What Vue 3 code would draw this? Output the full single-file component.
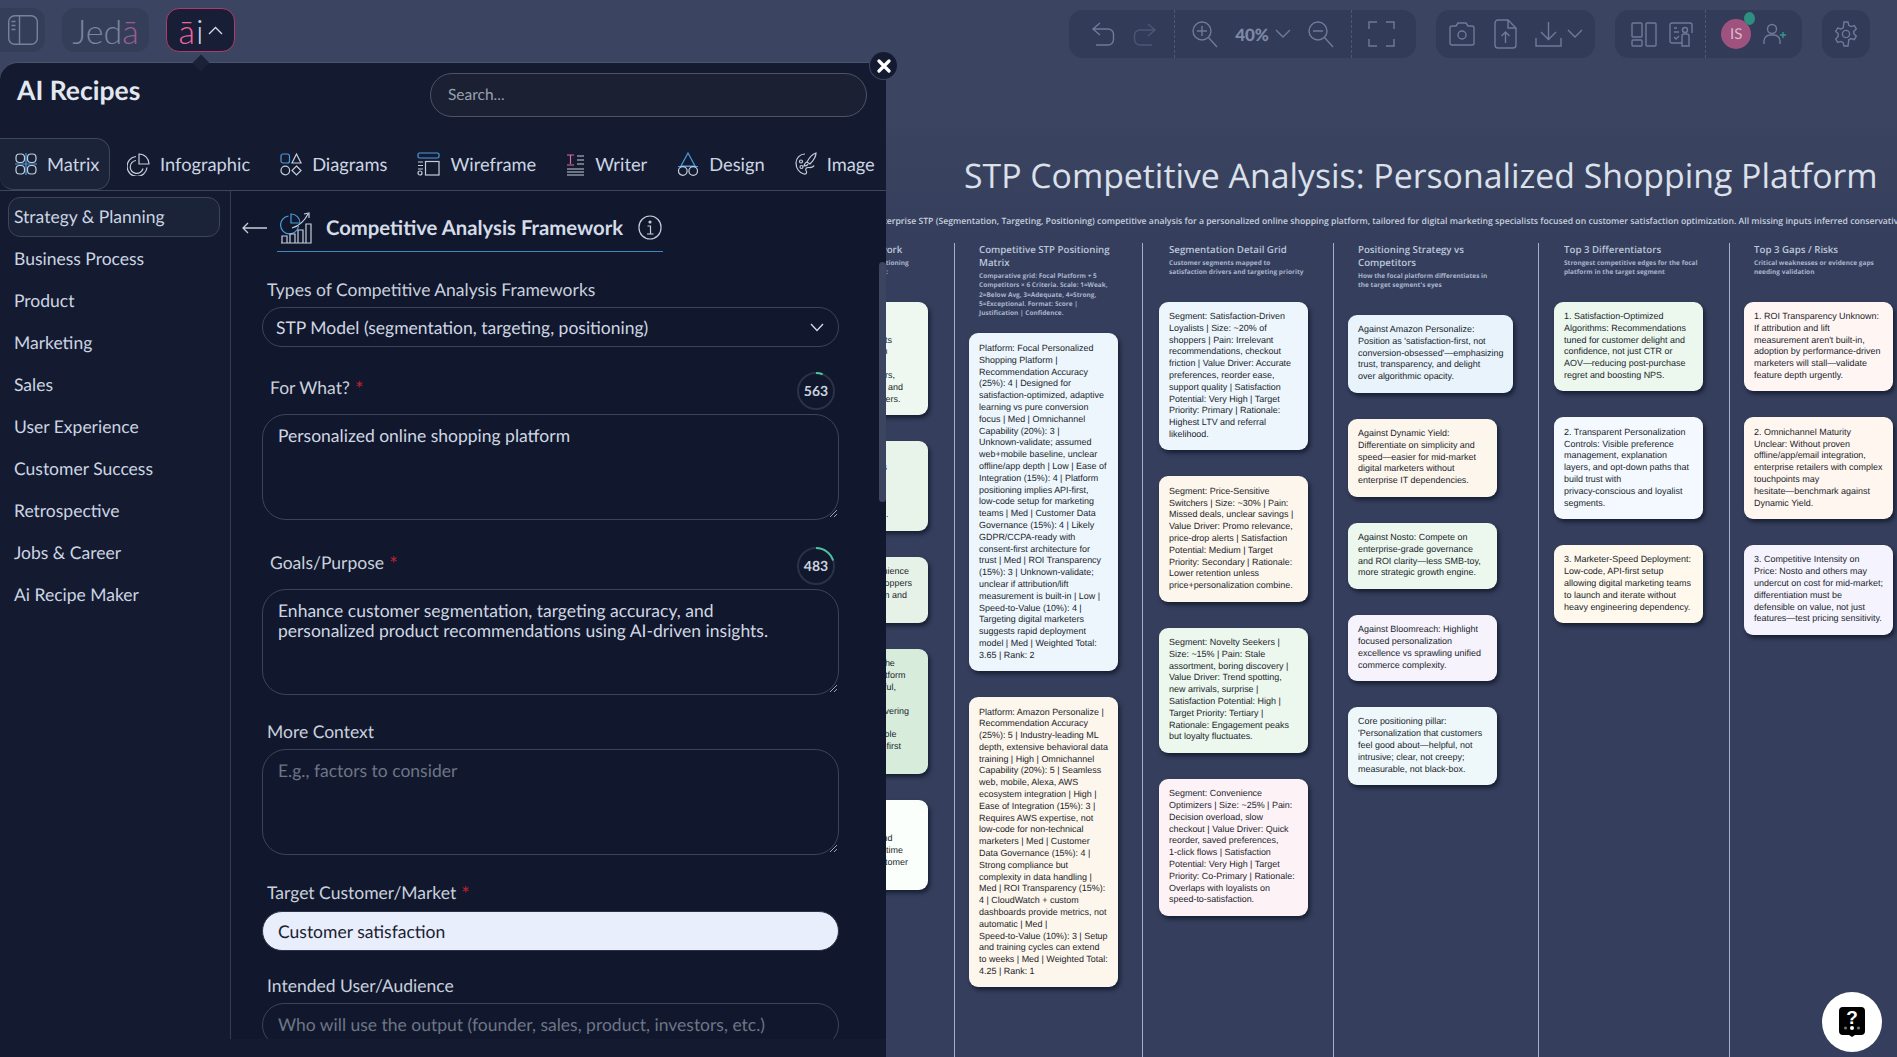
<template>
  <div class="app">
    <!-- top toolbar -->
    <header class="topbar">
      <div class="tool-left">
        <button class="sq-btn sq-btn--side">
          <svg width="30" height="30" viewBox="0 0 30 30" fill="none" stroke="#76829c" stroke-width="1.4">
            <rect x="0.7" y="0.7" width="28.6" height="28.6" rx="6" />
            <path d="M11.5 1v28M3.5 6.5h4M3.5 10.5h4M3.5 14.5h4" />
          </svg>
        </button>
        <button class="sq-btn sq-btn--jeda">Jed<span>ā</span></button>
        <button class="sq-btn sq-btn--ai">
          <span class="ai-a">ā</span><span class="ai-i">i</span>
          <svg width="15" height="9" viewBox="0 0 15 9" fill="none" stroke="#d5dcea" stroke-width="1.3"><path d="M1 8l6.5-6.5L14 8" /></svg>
        </button>
      </div>

      <div class="tool-right">
        <div class="tool-group tool-group--view">
          <svg class="ti" width="26" height="26" viewBox="0 0 26 26"><path d="M10 2L3 8l7 6M3 8h15a5.500 5.500 0 0 1 5.500 5.500v5a5.500 5.500 0 0 1-5.500 5.500H6" /></svg>
          <svg class="ti ti--off" width="26" height="26" viewBox="0 0 26 26"><path d="M16 3l7 6-7 6M23 9H8a5.500 5.500 0 0 0-5.500 5.500v4A5.500 5.500 0 0 0 8 24h12" /></svg>
          <span class="dash"></span>
          <svg class="ti" width="28" height="28" viewBox="0 0 28 28"><circle cx="11" cy="11" r="9" /><path d="M11 6v10M6 11h10M17.500 17.500L26 27" /></svg>
          <span class="zoom-val">40%<svg class="ti" width="16" height="10" viewBox="0 0 16 10"><path d="M1 1l7 7 7-7" /></svg></span>
          <svg class="ti" width="28" height="28" viewBox="0 0 28 28"><circle cx="11" cy="11" r="9" /><path d="M6 11h10M17.500 17.500L26 27" /></svg>
          <span class="dash"></span>
          <svg class="ti" width="27" height="26" viewBox="0 0 27 26"><path d="M9 1H1v7M18 1h8v7M9 25H1v-7M18 25h8v-7" /></svg>
        </div>

        <div class="tool-group tool-group--file">
          <svg class="ti" width="26" height="24" viewBox="0 0 26 24"><path d="M3 4h4l2-3h8l2 3h4a2 2 0 0 1 2 2v15a2 2 0 0 1-2 2H3a2 2 0 0 1-2-2V6a2 2 0 0 1 2-2z" /><circle cx="13" cy="13" r="4" /></svg>
          <svg class="ti" width="23" height="30" viewBox="0 0 23 30"><path d="M14 1H4a3 3 0 0 0-3 3v22a3 3 0 0 0 3 3h15a3 3 0 0 0 3-3V9zM14 1v8h8M11.500 24V13M7.500 17l4-4 4 4" /></svg>
          <span class="dl">
            <svg class="ti" width="27" height="27" viewBox="0 0 27 27"><path d="M13.500 1v17M6 11l7.500 7.500L21 11M1 17v8h25v-8" /></svg>
            <svg class="ti" width="16" height="10" viewBox="0 0 16 10"><path d="M1 1l7 7 7-7" /></svg>
          </span>
        </div>

        <div class="tool-group tool-group--user">
          <svg class="ti" width="26" height="25" viewBox="0 0 26 25"><rect x="1" y="1" width="10" height="14" rx="1" /><rect x="1" y="18" width="10" height="6" rx="1" /><rect x="15" y="1" width="10" height="23" rx="1" /></svg>
          <svg class="ti" width="24" height="25" viewBox="0 0 24 25"><path d="M13 21H3a2 2 0 0 1-2-2V3a2 2 0 0 1 2-2h18a2 2 0 0 1 2 2v8M5 6h3M5 10h5M5 15l2 2 3-3" /><circle cx="16" cy="8" r="2.500" /><path d="M13 24v-10a2 2 0 0 1 2-2h3a2 2 0 0 1 2 2v10z" /></svg>
          <span class="dash"></span>
          <div class="avatar">IS<i></i></div>
          <svg class="ti" width="25" height="22" viewBox="0 0 25 22"><circle cx="9" cy="6" r="4.500" /><path d="M1 21v-3a6 6 0 0 1 6-6h4a6 6 0 0 1 6 6v3" /><path class="plus" d="M20 9v6M17 12h6" /></svg>
        </div>

        <div class="tool-group tool-group--gear">
          <svg class="ti" width="24" height="26" viewBox="0 0 24 26"><circle cx="12" cy="13" r="3.600" /><path d="M10 1h4l.8 3.400 2.200 1.200 3.300-1 2 3.400-2.500 2.400v2.400L22.300 15.200l-2 3.400-3.300-1-2.200 1.200L14 25h-4l-.8-3.400-2.200-1.200-3.300 1-2-3.400L4.200 15.200v-2.400L1.700 10.400l2-3.400 3.300 1 2.200-1.200z" /></svg>
        </div>
      </div>
    </header>

    <!-- document on the canvas -->
    <main class="doc">
      <h1 class="doc-title">STP Competitive Analysis: Personalized Shopping Platform</h1>
      <p class="doc-summary">Enterprise STP (Segmentation, Targeting, Positioning) competitive analysis for a personalized online shopping platform, tailored for digital marketing specialists focused on customer satisfaction optimization. All missing inputs inferred conservatively.</p>
      <div class="cols">
        <section
          v-for="col in columns"
          :key="col.title"
          class="col"
          :style="{ width: col.width + 'px', paddingLeft: col.pad + 'px' }"
        >
          <div class="col-head" :style="{ marginBottom: col.gap + 'px' }">
            <h2>{{ col.title }}</h2>
            <p>{{ col.sub }}</p>
          </div>
          <div class="cards">
            <div
              v-for="card in col.cards"
              :key="card.text"
              class="card"
              :class="{ 'card--lines': col.lines }"
              :style="{ background: card.bg, width: (card.width || 149) + 'px' }"
            >{{ keepWords(card.text) }}</div>
          </div>
        </section>
      </div>
    </main>

    <!-- AI recipes popover -->
    <aside class="panel">
      <span class="panel-tip"></span>
      <button class="panel-close">
        <svg width="14" height="14" viewBox="0 0 14 14" stroke="#fff" stroke-width="3.200" stroke-linecap="round"><path d="M2 2l10 10M12 2L2 12" /></svg>
      </button>

      <div class="panel-head">
        <h3>AI Recipes</h3>
        <div class="search">Search...</div>
      </div>

      <nav class="tabs">
        <div class="tab tab--on">
          <svg class="pi" width="24" height="24" viewBox="0 0 24 24"><rect x="2" y="2" width="8.500" height="8.500" rx="3.500" /><rect x="13.500" y="2" width="8.500" height="8.500" rx="3.500" /><rect x="2" y="13.500" width="8.500" height="8.500" rx="3.500" /><rect x="13.500" y="13.500" width="8.500" height="8.500" rx="3.500" /><path class="bl" d="M1 12h22M12 1v22" /></svg>
          Matrix
        </div>
        <div class="tab">
          <svg class="pi" width="23" height="23" viewBox="0 0 23 23"><path d="M12 1v10h10a10 10 0 0 0-10-10zM9 3.500a10 10 0 1 0 11 11M9 7.500a6.500 6.500 0 1 0 7 8" /></svg>
          Infographic
        </div>
        <div class="tab">
          <svg class="pi" width="22" height="23" viewBox="0 0 22 23"><rect class="bl" x="1" y="1" width="8.500" height="9" rx="2" /><path d="M16.500 1l4.500 9h-9z" /><circle cx="5.300" cy="17.500" r="4.300" /><path d="M16.500 13l4.500 4.500-4.500 4.500-4.500-4.500z" /></svg>
          Diagrams
        </div>
        <div class="tab">
          <svg class="pi" width="23" height="24" viewBox="0 0 23 24"><rect class="bl" x="1" y="1" width="21" height="5" rx="1.500" /><rect x="8.500" y="9.500" width="13.500" height="13.500" /><path d="M1 10h5M1 13.500h5M1 17h5" /><circle cx="3" cy="21" r="2" /></svg>
          Wireframe
        </div>
        <div class="tab">
          <svg class="pi" width="19" height="23" viewBox="0 0 19 23"><path class="pk" d="M1 2h7M4.500 2v9M1 12h7" /><path d="M11 3h7M11 7h7M11 11h7M1 16h17M1 19h17M1 22h17" /></svg>
          Writer
        </div>
        <div class="tab">
          <svg class="pi" width="22" height="24" viewBox="0 0 22 24"><path class="bl" d="M11 1L18 14H4zM1 14.500h20" /><circle cx="5.800" cy="19" r="4.300" /><circle cx="16.200" cy="19" r="4.300" /></svg>
          Design
        </div>
        <div class="tab">
          <svg class="pi" width="22" height="24" viewBox="0 0 22 24"><path d="M10 2C5 2 1 6 1 11s3 10 8 11c3 .6 3-2 2-3.500-.8-1.500.5-3 2-3 2 0 5 .5 6-2M4.500 9.500a1.500 1.500 0 1 0 3 0 1.500 1.500 0 1 0-3 0M5 15a1.500 1.500 0 1 0 3 0 1.500 1.500 0 1 0-3 0" /><path d="M21 1c-3 1-7 5-9 9l3 2c3-3 6-7 6-11zM12 10c-2 .5-2.500 2-3 4 2 0 3.500-.5 4-2" /></svg>
          Image
        </div>
      </nav>

      <div class="panel-body">
        <ul class="side">
          <li v-for="(item, i) in categories" :key="item" :class="{ on: i === 0 }">{{ item }}</li>
        </ul>

        <div class="form">
          <div class="form-head">
            <svg class="back" width="26" height="12" viewBox="0 0 26 12" fill="none" stroke="#c6cedb" stroke-width="1.300"><path d="M25 6H1M6 1L1 6l5 5" /></svg>
            <div class="form-title">
              <svg class="pi" width="32" height="32" viewBox="0 0 32 32"><path class="bl" d="M11 2v9h9a9 9 0 0 0-9-9zM8.500 4a9 9 0 1 0 10 10" /><path d="M1 31h30M2 24h5v7H2zM10 22h5v9h-5zM18 18h5v13h-5zM26 12h5v19h-5zM12 16c7-2 12-6 16-14M24 2l5-1 0 5" /></svg>
              <h4>Competitive Analysis Framework</h4>
              <svg class="pi info" width="24" height="25" viewBox="0 0 24 25"><rect x="1" y="1" width="22" height="23" rx="11" /><circle cx="12" cy="7" r="1" fill="#c6cedb" /><path d="M9.500 11h3v8M9 19h6.500" /></svg>
            </div>
          </div>

          <template v-for="field in fields" :key="field.label">
            <div class="label-row" :class="{ 'label-row--counter': field.count }" :style="{ marginTop: field.top + 'px' }">
              <label>{{ field.label }}<b v-if="field.req"> *</b></label>
              <div v-if="field.count" class="counter">
                <svg width="38" height="38" viewBox="0 0 38 38" fill="none">
                  <circle cx="19" cy="19" r="18" stroke="#2a3246" stroke-width="2" />
                  <circle
                    cx="19" cy="19" r="18" stroke="#4cc49e" stroke-width="2"
                    pathLength="100"
                    :stroke-dasharray="field.arc + ' 100'"
                    transform="rotate(-90 19 19)"
                  />
                </svg>
                <span>{{ field.count }}</span>
              </div>
            </div>
            <div class="input" :class="'input--' + field.kind">
              <span :class="{ ph: field.ph }">{{ field.value }}</span>
              <svg v-if="field.kind === 'area'" class="grip" width="10" height="10" viewBox="0 0 10 10" stroke="#9aa3b3"><path d="M9 2L2 9M9 6L6 9" /></svg>
              <svg v-if="field.kind === 'select'" class="chev" width="14" height="9" viewBox="0 0 14 9" fill="none" stroke="#d4dbe6" stroke-width="1.300"><path d="M1 1l6 6.500L13 1" /></svg>
            </div>
          </template>
        </div>
        <span class="scroll-thumb"></span>
      </div>
    </aside>

    <button class="help">
      <svg width="26" height="30" viewBox="0 0 26 30">
        <path d="M4 0h18a4 4 0 0 1 4 4v20a4 4 0 0 1-4 4h-6l-3 2-3-2H4a4 4 0 0 1-4-4V4a4 4 0 0 1 4-4z" fill="#000" />
        <circle cx="6.500" cy="21" r="1.500" fill="#777" /><circle cx="19.500" cy="21" r="1.500" fill="#777" /><circle cx="13" cy="21" r="2" fill="#fff" />
        <text x="13" y="17" text-anchor="middle" class="help-q">?</text>
      </svg>
    </button>
  </div>
</template>

<script setup>
const categories = [
  'Strategy & Planning', 'Business Process', 'Product', 'Marketing', 'Sales',
  'User Experience', 'Customer Success', 'Retrospective', 'Jobs & Career', 'Ai Recipe Maker'
]

const fields = [
  { label: 'Types of Competitive Analysis Frameworks', kind: 'select', top: 28, value: 'STP Model (segmentation, targeting, positioning)' },
  { label: 'For What?', req: true, count: 563, arc: 6, kind: 'area', top: 25, value: 'Personalized online shopping platform' },
  { label: 'Goals/Purpose', req: true, count: 483, arc: 20, kind: 'area', top: 27, value: 'Enhance customer segmentation, targeting accuracy, and personalized product recommendations using AI-driven insights.' },
  { label: 'More Context', kind: 'area', top: 27, ph: true, value: 'E.g., factors to consider' },
  { label: 'Target Customer/Market', req: true, kind: 'filled', top: 28, value: 'Customer satisfaction' },
  { label: 'Intended User/Audience', kind: 'line', top: 25, ph: true, value: 'Who will use the output (founder, sales, product, investors, etc.)' }
]

// the board never wraps inside a hyphenated word or at a dash
const keepWords = (text) => text.replace(/-/g, '-\u2060').replace(/—/g, '\u2060—\u2060')

const blue = '#edf6fc'
const cream = '#fdf6ec'
const green = '#ecf7ee'
const pink = '#fdf3f7'
const lilac = '#f6f3fc'

const columns = [
  {
    title: 'STP Analysis Framework', width: 190, pad: 14, gap: 25, lines: true,
    sub: 'Segmentation, Targeting, Positioning\nFramework applied to market:',
    cards: [
      { bg: '#eef8f0', text: 'Segmentation approach:\nOnline shoppers\ngrouped across segments\nby intent and satisfaction\nbehaviour\nwith value-focused buyers,\nsavings seekers, trends, and\nconvenience-led customers.' },
      { bg: '#e8f4ea', text: 'Targeting approach\nSatisfaction-first loyalists\nand high-value targeting\nsegments\nacross retail teams and\ndigital commerce (scale).' },
      { bg: '#e6f2e8', text: 'Primary focus on convenience\nand loyal, repeat-buy shoppers\nwho seek personalization and\ntransparent value (ROI).' },
      { bg: '#d8ecdc', text: 'Positioning statement: The\nfocal personalization platform\nis the most trusted, helpful,\nrecommendation layer\nfor marketing teams delivering\nmeasurable delight\nat mid-market and scalable\nprice for any lean digital-first\nretailer.' },
      { bg: '#fbfffc', text: 'Outcome measures that\nmatter most\nfor retention, the NPS and\nconfidence, trust and lifetime\nvalue earned from a customer\nadvocacy.' }
    ]
  },
  {
    title: 'Competitive STP Positioning Matrix', width: 188, pad: 14, gap: 16,
    sub: 'Comparative grid: Focal Platform + 5 Competitors × 6 Criteria. Scale: 1=Weak, 2=Below Avg, 3=Adequate, 4=Strong, 5=Exceptional. Format: Score | Justification | Confidence.',
    cards: [
      { bg: blue, text: 'Platform: Focal Personalized Shopping Platform | Recommendation Accuracy (25%): 4 | Designed for satisfaction-optimized, adaptive learning vs pure conversion focus | Med | Omnichannel Capability (20%): 3 | Unknown-validate; assumed web+mobile baseline, unclear offline/app depth | Low | Ease of Integration (15%): 4 | Platform positioning implies API-first, low-code setup for marketing teams | Med | Customer Data Governance (15%): 4 | Likely GDPR/CCPA-ready with consent-first architecture for trust | Med | ROI Transparency (15%): 3 | Unknown-validate; unclear if attribution/lift measurement is built-in | Low | Speed-to-Value (10%): 4 | Targeting digital marketers suggests rapid deployment model | Med | Weighted Total: 3.65 | Rank: 2' },
      { bg: cream, text: 'Platform: Amazon Personalize | Recommendation Accuracy (25%): 5 | Industry-leading ML depth, extensive behavioral data training | High | Omnichannel Capability (20%): 5 | Seamless web, mobile, Alexa, AWS ecosystem integration | High | Ease of Integration (15%): 3 | Requires AWS expertise, not low-code for non-technical marketers | Med | Customer Data Governance (15%): 4 | Strong compliance but complexity in data handling | Med | ROI Transparency (15%): 4 | CloudWatch + custom dashboards provide metrics, not automatic | Med | Speed-to-Value (10%): 3 | Setup and training cycles can extend to weeks | Med | Weighted Total: 4.25 | Rank: 1' }
    ]
  },
  {
    title: 'Segmentation Detail Grid', width: 191, pad: 16, gap: 25,
    sub: 'Customer segments mapped to satisfaction drivers and targeting priority',
    cards: [
      { bg: blue, text: 'Segment: Satisfaction-Driven Loyalists | Size: ~20% of shoppers | Pain: Irrelevant recommendations, checkout friction | Value Driver: Accurate preferences, reorder ease, support quality | Satisfaction Potential: Very High | Target Priority: Primary | Rationale: Highest LTV and referral likelihood.' },
      { bg: cream, text: 'Segment: Price-Sensitive Switchers | Size: ~30% | Pain: Missed deals, unclear savings | Value Driver: Promo relevance, price-drop alerts | Satisfaction Potential: Medium | Target Priority: Secondary | Rationale: Lower retention unless price+personalization combine.' },
      { bg: green, text: 'Segment: Novelty Seekers | Size: ~15% | Pain: Stale assortment, boring discovery | Value Driver: Trend spotting, new arrivals, surprise | Satisfaction Potential: High | Target Priority: Tertiary | Rationale: Engagement peaks but loyalty fluctuates.' },
      { bg: pink, text: 'Segment: Convenience Optimizers | Size: ~25% | Pain: Decision overload, slow checkout | Value Driver: Quick reorder, saved preferences, 1-click flows | Satisfaction Potential: Very High | Target Priority: Co-Primary | Rationale: Overlaps with loyalists on speed-to-satisfaction.' }
    ]
  },
  {
    title: 'Positioning Strategy vs Competitors', width: 205, pad: 14, gap: 25,
    sub: "How the focal platform differentiates in the target segment's eyes",
    cards: [
      { bg: '#e8f3fb', width: 165, text: "Against Amazon Personalize: Position as 'satisfaction-first, not conversion-obsessed'—emphasizing trust, transparency, and delight over\u00a0algorithmic opacity." },
      { bg: cream, text: 'Against Dynamic Yield: Differentiate on simplicity and speed—easier for mid-market digital marketers without enterprise IT dependencies.' },
      { bg: green, text: 'Against Nosto: Compete on enterprise-grade governance and ROI clarity—less SMB-toy, more strategic growth engine.' },
      { bg: lilac, text: 'Against Bloomreach: Highlight focused personalization excellence vs sprawling unified commerce complexity.' },
      { bg: '#eef8fb', text: "Core positioning pillar: 'Personalization that customers feel good about—helpful, not intrusive; clear, not creepy; measurable, not black-box." }
    ]
  },
  {
    title: 'Top 3 Differentiators', width: 191, pad: 15, gap: 25,
    sub: 'Strongest competitive edges for the focal platform in the target segment',
    cards: [
      { bg: green, text: '1. Satisfaction-Optimized Algorithms: Recommendations tuned for customer delight and confidence, not just CTR or AOV—reducing post-purchase regret and boosting NPS.' },
      { bg: '#f3f9fe', text: '2. Transparent Personalization Controls: Visible preference management, explanation layers, and opt-down paths that build trust with privacy-conscious and loyalist segments.' },
      { bg: '#fef9ec', text: '3. Marketer-Speed Deployment: Low-code, API-first setup allowing digital marketing teams to launch and iterate without heavy engineering dependency.' }
    ]
  },
  {
    title: 'Top 3 Gaps / Risks', width: 168, pad: 14, gap: 25,
    sub: 'Critical weaknesses or evidence gaps needing validation',
    cards: [
      { bg: '#fff5f3', text: "1. ROI Transparency Unknown: If attribution and lift measurement aren't built-in, adoption by performance-driven marketers will stall—validate feature depth urgently." },
      { bg: '#fff6ef', text: '2. Omnichannel Maturity Unclear: Without proven offline/app/email integration, enterprise retailers with complex touchpoints may hesitate—benchmark against Dynamic Yield.' },
      { bg: '#f5f3fd', text: '3. Competitive Intensity on Price: Nosto and others may undercut on cost for mid-market; differentiation must be defensible on value, not just features—test pricing sensitivity.' }
    ]
  }
]
</script>

<style>
html, body { margin: 0; height: 100%; overflow: hidden; background: #3a4460; }
</style>

<style scoped>
.app {
  position: relative;
  width: 1897px;
  height: 1057px;
  overflow: hidden;
  display: flex;
  flex-direction: column;
  background: linear-gradient(180deg, #3b4561 0, #3b4561 110px, #353f5d 240px);
  font-family: "Lato", "Liberation Sans", sans-serif;
  text-rendering: geometricPrecision;
}
button { font: inherit; border: 0; padding: 0; }

/* top bar */
.topbar {
  flex: none;
  height: 68px;
  display: flex;
  justify-content: space-between;
}
.tool-left { display: flex; gap: 17px; padding-top: 8px; align-items: flex-start; }
.sq-btn {
  height: 44px;
  display: flex;
  align-items: center;
  justify-content: center;
  border-radius: 13px;
  background: #353e59;
}
.sq-btn--side { width: 45px; border-radius: 0 13px 13px 0; padding-left: 0; }
.sq-btn--jeda { width: 87px; font-size: 34px; font-weight: 300; color: #7a859f; }
.sq-btn--jeda span { color: #9a5e90; }
.sq-btn--ai {
  width: 69px;
  box-sizing: border-box;
  background: #171e36;
  border: 1.5px solid #b03a6c;
  gap: 1px;
  font-size: 34px;
  font-weight: 300;
}
.ai-a { color: #f0659c; }
.ai-i { color: #c9d3e8; margin-right: 3px; }

.tool-right { display: flex; gap: 20px; padding: 10px 27px 0 0; align-items: flex-start; }
.tool-group {
  height: 48px;
  box-sizing: border-box;
  display: flex;
  align-items: center;
  justify-content: space-between;
  border-radius: 14px;
  background: #323b58;
}
.tool-group--view { width: 347px; padding: 0 21px; }
.tool-group--file { width: 159px; padding: 0 12px 0 13px; }
.tool-group--user { width: 187px; padding: 0 14px 0 16px; }
.tool-group--gear { width: 48px; justify-content: center; }
.dl { display: flex; align-items: center; gap: 5px; }
.ti { fill: none; stroke: #6f7b98; stroke-width: 1.4; flex: none; }
.ti--off { stroke: #4c5775; }
.ti .plus { stroke: #2f9a8a; }
.dash { width: 0; height: 48px; border-left: 1px dashed #4d5874; }
.zoom-val {
  display: flex;
  align-items: center;
  gap: 6px;
  font-size: 17px;
  font-weight: 900;
  color: #7e89a6;
}
.avatar {
  position: relative;
  width: 30px;
  height: 30px;
  margin-left: 4px;
  border-radius: 50%;
  background: #a0527f;
  color: #d9bccd;
  font-size: 15px;
  line-height: 30px;
  text-align: center;
}
.avatar i {
  position: absolute;
  top: -7px;
  right: -4px;
  width: 11px;
  height: 13px;
  border-radius: 50%;
  background: #2e8f80;
}

/* canvas document */
.doc { flex: 1; min-height: 0; margin-left: 764px; display: flex; flex-direction: column; }
.doc-title {
  margin: 84px 0 0 200px;
  font: 400 33.8px/46px "Open Sans", sans-serif;
  color: #dbe0ea;
  white-space: nowrap;
}
.doc-summary {
  margin: 17px 0 0 109px;
  font: 600 8.66px/12px "Open Sans", sans-serif;
  color: #c6cfdf;
  white-space: nowrap;
}
.cols { flex: 1; display: flex; margin-top: 16px; min-height: 0; }
.col {
  flex: none;
  box-sizing: border-box;
  border-left: 1px solid #9fb0cf;
}
.col-head h2 {
  margin: 0;
  padding: 0 10px 0 10px;
  font: 600 9.7px/13px "Open Sans", sans-serif;
  color: #bcc7da;
  width: 140px;
  box-sizing: content-box;
}
.col-head p {
  margin: 2px 0 0;
  padding: 0 10px;
  width: 135px;
  font: 700 6.5px/9.300px "Open Sans", sans-serif;
  color: #a8b4ca;
  white-space: pre-line;
}
.cards { display: flex; flex-direction: column; gap: 26px; align-items: flex-start; }
.card {
  box-sizing: border-box;
  padding: 9.500px 10px;
  border-radius: 9px;
  font: 400 8.960px/11.800px "Liberation Sans", Arial, sans-serif;
  color: #20242b;
  box-shadow: 2px 3px 4px rgba(8, 12, 28, 0.65);
}
.card--lines { white-space: pre; }

/* recipes panel */
.panel {
  position: absolute;
  left: 0;
  top: 62px;
  bottom: 0;
  width: 886px;
  display: flex;
  flex-direction: column;
  padding-bottom: 18px;
  box-sizing: border-box;
  background: #141b31;
  border-top: 1px solid #49536c;
  border-radius: 18px 0 0 0;
  color: #cdd5e1;
}
.panel-tip {
  position: absolute;
  left: 195px;
  top: -6px;
  width: 12px;
  height: 12px;
  background: #1b2238;
  transform: rotate(45deg);
}
.panel-close {
  position: absolute;
  right: -11px;
  top: -11px;
  width: 27px;
  height: 27px;
  border-radius: 50%;
  background: #141b31;
  box-shadow: 0 0 0 1px #3b4560;
  display: flex;
  align-items: center;
  justify-content: center;
  z-index: 2;
}
.panel-head {
  flex: none;
  height: 75px;
  display: flex;
  align-items: flex-start;
  justify-content: space-between;
  padding: 10px 19px 0 17px;
  box-sizing: border-box;
}
.panel-head h3 {
  margin: 1px 0 0;
  font-size: 26.5px;
  font-weight: 700;
  color: #e3e8f0;
}
.search {
  width: 437px;
  height: 44px;
  box-sizing: border-box;
  border: 1px solid #4b5468;
  border-radius: 22px;
  background: #1b2033;
  padding-left: 17px;
  font-size: 15.500px;
  line-height: 42px;
  color: #98a0b0;
}
.tabs {
  flex: none;
  height: 53px;
  box-sizing: border-box;
  display: flex;
  border-bottom: 1px solid #3c4559;
  font-size: 18.300px;
  color: #ccd5e2;
}
.tab { flex: none; display: flex; align-items: center; gap: 10px; padding-right: 30px; white-space: nowrap; }
.tab:last-child { padding-right: 0; }
.tab--on {
  width: 110px;
  box-sizing: border-box;
  padding: 0 0 0 14px;
  gap: 9px;
  margin-right: 17px;
  border: 1px solid #3c4559;
  border-left: 0;
  border-radius: 0 14px 14px 14px;
  background: #1b2339;
}
.pi { fill: none; stroke: #c5cedc; stroke-width: 1.2; flex: none; }
.pi .bl { stroke: #4a9bdb; }
.pi .pk { stroke: #e06aa5; }

.panel-body { flex: 1; min-height: 0; display: flex; position: relative; }
.side {
  flex: none;
  width: 231px;
  box-sizing: border-box;
  margin: 0;
  padding: 6px 0 0 8px;
  list-style: none;
  border-right: 1px solid #333c50;
  font-size: 17.500px;
  color: #ccd5e2;
}
.side li {
  width: 212px;
  height: 40px;
  box-sizing: border-box;
  margin-bottom: 2px;
  padding-left: 6px;
  line-height: 40px;
  white-space: nowrap;
}
.side li.on {
  border: 1px solid #3c4559;
  border-radius: 12px;
  background: #1b2339;
  padding-left: 5px;
  line-height: 38px;
}
.form { flex: 1; min-width: 0; overflow: hidden; padding: 13px 0 0 11px; background: #11182d; }
.form-head { display: flex; align-items: center; height: 48px; }
.back { margin-right: 9px; }
.form-title {
  width: 386px;
  height: 48px;
  box-sizing: border-box;
  border-bottom: 1.5px solid #3f86c0;
  padding-left: 3px;
  display: flex;
  align-items: center;
  gap: 14px;
}
.form-title h4 {
  margin: 0;
  font-size: 20.300px;
  font-weight: 700;
  color: #d5dce8;
  white-space: nowrap;
}
.info { margin-left: 1px; }

.label-row {
  margin-left: 20px;
  width: 577px;
  box-sizing: border-box;
  padding: 0 4px 0 5px;
  height: 20px;
  line-height: 20px;
  margin-bottom: 7px;
  font-size: 17.500px;
  color: #c9d1dd;
}
.label-row--counter {
  height: 38px;
  display: flex;
  justify-content: space-between;
  align-items: center;
  margin-bottom: 4px;
  padding-left: 8px;
}
.label-row--counter label { margin-top: -5px; }
.label-row b { color: #c4202f; font-weight: 400; font-size: 20px; vertical-align: -2px; }
.counter {
  position: relative;
  width: 38px;
  height: 38px;
  display: flex;
  align-items: center;
  justify-content: center;
  font-size: 14px;
  font-weight: 700;
  color: #cbd3df;
}
.counter svg { position: absolute; left: 0; top: 0; }
.counter span { position: relative; line-height: 16px; }
.input {
  position: relative;
  margin-left: 20px;
  width: 577px;
  box-sizing: border-box;
  border: 1px solid #3b4458;
  color: #d0d7e2;
  font-size: 17.500px;
  line-height: 20px;
  padding: 0 15px;
}
.input--area { height: 106px; border-radius: 24px; padding: 11px 30px 0 15px; }
.input--select { height: 40px; border-radius: 20px; line-height: 40px; padding-left: 13px; }
.input--filled { height: 40px; margin-top: 8px; border-radius: 20px; background: #e8eefb; color: #1b2131; line-height: 40px; border-color: #2b3347; }
.input--line { height: 44px; border-radius: 22px; line-height: 41px; }
.ph { color: #6d7586; }
.grip { position: absolute; right: 0; bottom: 1px; }
.chev { position: absolute; right: 14px; top: 15px; }
.scroll-thumb {
  position: absolute;
  right: 0;
  top: 71px;
  width: 7px;
  height: 240px;
  border-radius: 4px;
  background: #3c4560;
}

/* help */
.help {
  position: absolute;
  right: 15px;
  bottom: 5px;
  width: 60px;
  height: 60px;
  border-radius: 50%;
  background: #fff;
  display: flex;
  align-items: center;
  justify-content: center;
}
.help-q { font: 700 19px "Liberation Sans", sans-serif; fill: #fff; }
</style>
